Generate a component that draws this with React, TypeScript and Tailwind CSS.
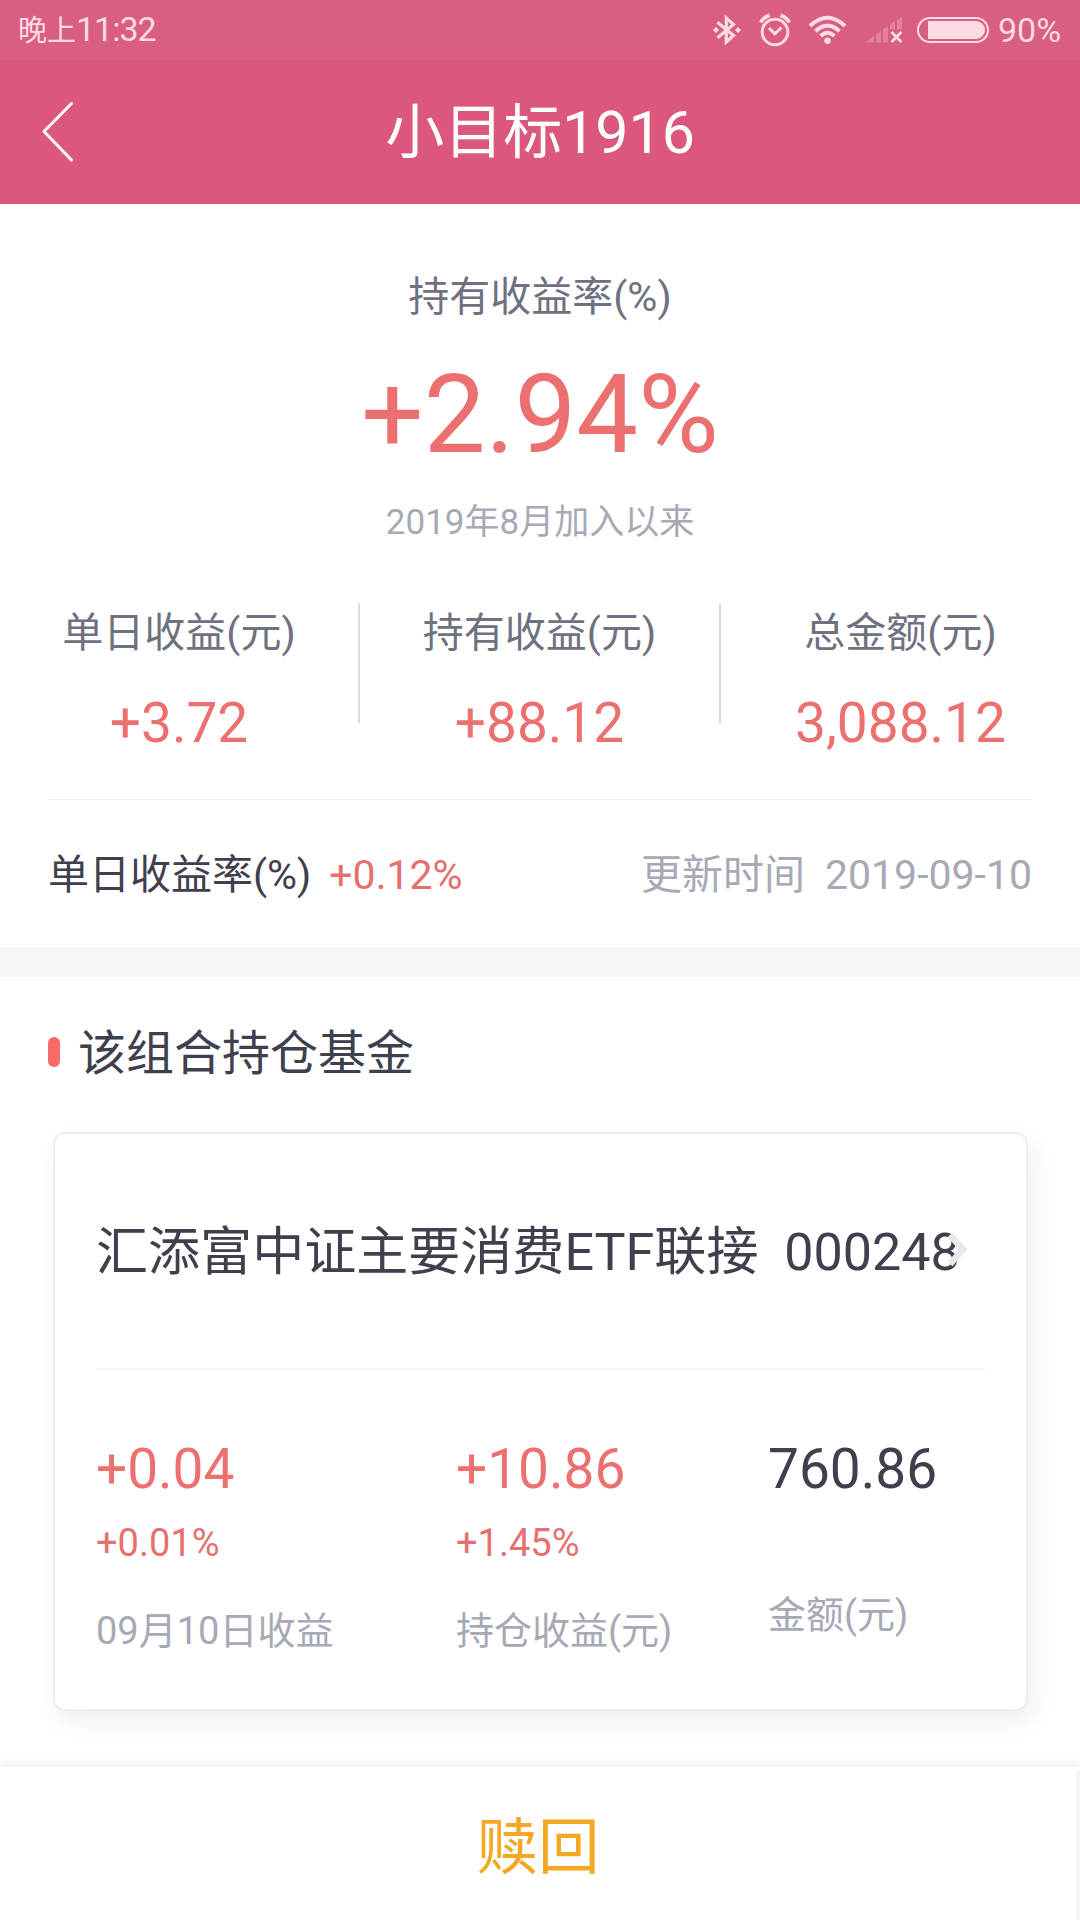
const stats = [
  { label: "单日收益(元)", value: "+3.72" },
  { label: "持有收益(元)", value: "+88.12" },
  { label: "总金额(元)", value: "3,088.12" },
];

const BluetoothIcon = () => (
  <svg width="29" height="32" viewBox="0 0 29 32" fill="none" stroke="currentColor">
    <path d="M4.5 8.2 L20.5 21.5 L13.3 28 V4 L20.5 10.5 L4.5 23.8" strokeWidth="3.2" />
    <path d="M3 13 L6 16 L3 19 L0 16 Z M25 13 L28 16 L25 19 L22 16 Z" fill="currentColor" stroke="none" />
  </svg>
);

const AlarmIcon = () => (
  <svg width="33" height="34" viewBox="0 0 33 34" fill="none" stroke="currentColor">
    <circle cx="16" cy="19" r="12.8" strokeWidth="3" />
    <path d="M10 15 L15.8 20.8 L22.5 14.5" strokeWidth="3" />
    <path d="M1.8 9.5 Q4 4.5 10.5 2.4 M30.2 9.5 Q28 4.5 21.5 2.4" strokeWidth="3.8" />
  </svg>
);

const WifiIcon = () => (
  <svg width="40" height="30" viewBox="0 0 40 30" fill="none" stroke="currentColor" strokeWidth="4">
    <path d="M2 11 Q19.5 -5.5 37 11" />
    <path d="M7.5 16.2 Q19.5 5 31.5 16.2" />
    <path d="M12.6 21 Q19.5 14.5 26.4 21" />
    <circle cx="19.5" cy="25.8" r="3.2" fill="currentColor" stroke="none" />
  </svg>
);

const SignalIcon = () => (
  <svg width="37" height="26" viewBox="0 0 37 26">
    <g fill="currentColor" opacity="0.28">
      <path d="M0 25.5 L9 19 V25.5 Z" />
      <path d="M11 17.5 L16 14 V25.5 H11 Z" />
      <path d="M18 12.5 L23 9 V25.5 H18 Z" />
      <path d="M25 7.5 L30 4 V12.5 H25 Z" />
      <path d="M32 3 L37 0 V12.5 H32 Z" />
    </g>
    <path d="M26.5 15 L36.3 25 M36.3 15 L26.5 25" stroke="currentColor" strokeWidth="2.6" />
  </svg>
);

const BatteryIcon = () => (
  <svg width="72" height="26" viewBox="0 0 72 26" fill="none">
    <rect x="1" y="1" width="70" height="24" rx="12" stroke="currentColor" strokeWidth="2" />
    <path d="M11 4 H59 A9 9 0 0 1 59 22 H11 Z" fill="currentColor" />
  </svg>
);

const StatusBar = () => (
  <div className="flex h-15 items-center justify-between bg-[#d95e82] pl-[18px] pr-[17px] text-[#fddbe4]">
    <span className="text-[34px] leading-[60px] tracking-[-1px]">
      <span className="text-[29px] tracking-normal">晚上</span>11:32
    </span>
    <div className="flex items-center">
      <BluetoothIcon />
      <span className="ml-[17px]">
        <AlarmIcon />
      </span>
      <span className="ml-4">
        <WifiIcon />
      </span>
      <span className="ml-[17px]">
        <SignalIcon />
      </span>
      <span className="ml-[15px]">
        <BatteryIcon />
      </span>
      <span className="ml-[9px] w-[65px] text-[34px] leading-[62px]">90%</span>
    </div>
  </div>
);

const Header = () => (
  <header className="grid h-36 grid-cols-[120px_1fr_120px] items-center bg-[#dc577e] text-white">
    <svg className="ml-[41px]" width="34" height="62" viewBox="0 0 34 62" fill="none">
      <path d="M30.5 2.5 L3 30.5 L30.5 59" stroke="currentColor" strokeWidth="3" strokeLinecap="round" strokeLinejoin="round" />
    </svg>
    <h1 className="pt-0.5 text-center text-[59px] leading-[80px]">小目标1916</h1>
  </header>
);

const Summary = () => (
  <section className="flex flex-col pt-[63px] text-center">
    <p className="text-[41px] leading-[60px] text-[#6f7180]">持有收益率(%)</p>
    <p className="mt-7 text-[110px] leading-[120px] text-[#ec706f]">+2.94%</p>
    <p className="mt-[23px] text-[35px] leading-[50px] text-[#a7a9b6]">2019年8月加入以来</p>
    <div className="mt-[55px] grid grid-cols-[360px_361px_359px]">
      {stats.map((stat, i) => (
        <div key={stat.label} className="flex">
          <div className="flex-1">
            <p className="text-[41px] leading-[60px] text-[#6f7180]">{stat.label}</p>
            <p className="mt-[30px] text-[55px] leading-[60px] text-[#ec706f]">{stat.value}</p>
          </div>
          {i < 2 && <div className="h-30 w-0.5 bg-[#dcdcdc]" />}
        </div>
      ))}
    </div>
    <div className="mx-12 mt-[46px] flex h-[148px] items-center justify-between border-t border-[#f3f3f3] pt-0.5 text-[41px] leading-[60px]">
      <p className="flex gap-[18px] text-[#3f404d]">
        单日收益率(%)<span className="text-[#e6706f]">+0.12%</span>
      </p>
      <p className="flex gap-5 text-[#a7a9b6]">
        更新时间<span>2019-09-10</span>
      </p>
    </div>
  </section>
);

const FundCard = () => (
  <div className="ml-[53px] mr-[52px] mt-[50px] h-[579px] rounded-xl border-2 border-[#eeeeee] bg-white px-[41px] shadow-[5px_10px_24px_rgba(0,0,0,0.07)]">
    <div className="relative flex h-[236px] items-center border-b-2 border-[#f5f5f5] pt-[3px]">
      <p className="whitespace-pre text-[52.05px] leading-[70px] text-[#3f404d]">汇添富中证主要消费ETF联接  000248</p>
      {/* The arrow overlaps the end of long fund names */}
      <svg className="absolute right-[17px] top-[98px]" width="20" height="36" viewBox="0 0 20 36" fill="none">
        <path d="M2 3 L15 17.5 L2 32" stroke="#e9e9ea" strokeWidth="6.5" />
      </svg>
    </div>
    <div className="grid grid-cols-[360px_312px_1fr] pt-16 text-[38px] leading-[50px]">
      <div className="text-[#e6706f]">
        <p className="text-[55px] leading-[70px] text-[#ec706f]">+0.04</p>
        <p className="mt-3.5">+0.01%</p>
        <p className="mt-[38px] text-[#a7a9b6]">09月10日收益</p>
      </div>
      <div className="text-[#e6706f]">
        <p className="text-[55px] leading-[70px] text-[#ec706f]">+10.86</p>
        <p className="mt-3.5">+1.45%</p>
        <p className="mt-[38px] text-[#a7a9b6]">持仓收益(元)</p>
      </div>
      <div>
        <p className="text-[55px] leading-[70px] text-[#3f404d]">760.86</p>
        <p className="mt-[86px] text-[#a7a9b6]">金额(元)</p>
      </div>
    </div>
  </div>
);

const App = () => {
  return (
    <div className="flex h-[1920px] w-[1080px] flex-col overflow-hidden bg-white font-['Roboto','Noto_Sans_CJK_SC',sans-serif]">
      <StatusBar />
      <Header />
      <Summary />
      <div className="h-[30px] bg-[#f5f5f5]" />
      <section className="flex-1 pt-[45px]">
        <div className="ml-12 flex h-15 items-center gap-[18px]">
          <span className="h-[30px] w-3 rounded-full bg-[#f86b68]" />
          <h2 className="pt-1 text-[48px] leading-[60px] text-[#3f404d]">该组合持仓基金</h2>
        </div>
        <FundCard />
      </section>
      <button className="h-[153px] w-full border-t-[3px] border-white bg-white shadow-[0_0_16px_4px_rgba(0,0,0,0.06)]">
        <span className="flex h-full items-center justify-center border-r-4 border-[#f5f5f5] pt-1.5 text-[61.5px] text-[#f5a623]">赎回</span>
      </button>
    </div>
  );
};

export default App;
